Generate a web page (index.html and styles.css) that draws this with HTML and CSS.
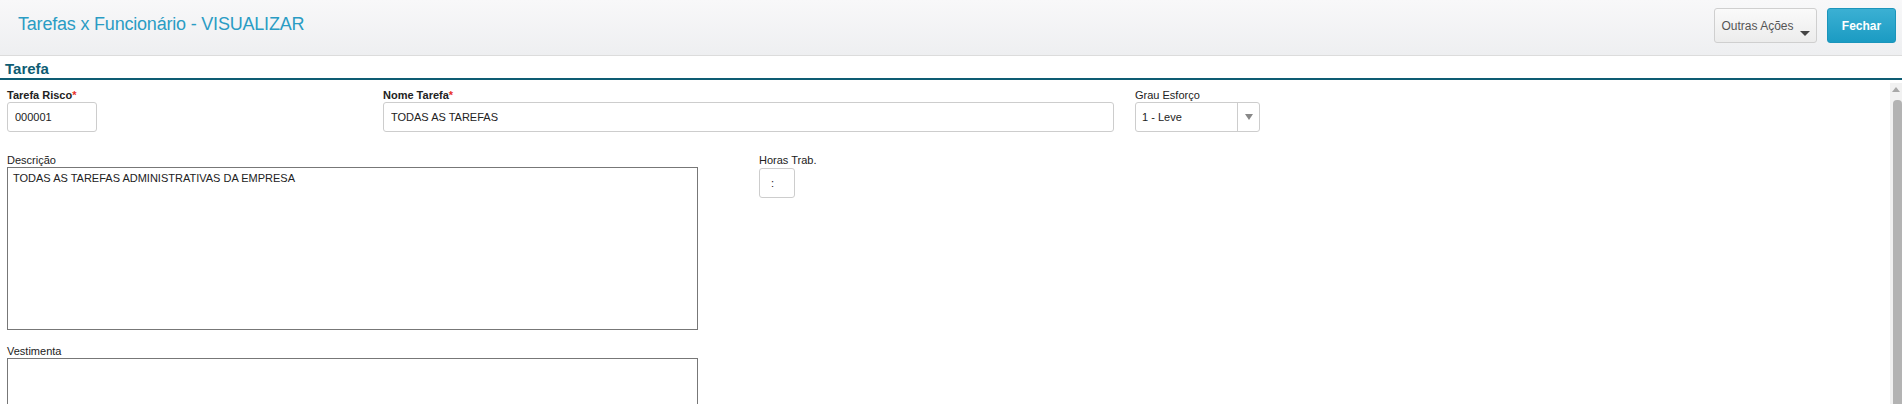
FILE: index.html
```html
<!DOCTYPE html>
<html lang="pt-BR">

<head>
    <meta charset="UTF-8">
    <title>Tarefas x Funcionário - VISUALIZAR</title>
    <link rel="stylesheet" href="styles.css">
</head>

<body>

    <div class="top_bar">
        <h1 class="page_title">Tarefas x Funcionário - VISUALIZAR</h1>
        <div class="top_actions">
            <button class="btn_other">Outras Ações<span class="caret"></span></button>
            <button class="btn_close">Fechar</button>
        </div>
    </div>

    <div class="section_head">Tarefa</div>

    <div class="page_body">
        <div class="form_area">

            <div class="form_row">
                <div class="field field_code">
                    <label>Tarefa Risco<span class="req">*</span></label>
                    <input type="text" class="box" value="000001" readonly>
                </div>
                <div class="field field_name">
                    <label>Nome Tarefa<span class="req">*</span></label>
                    <input type="text" class="box" value="TODAS AS TAREFAS" readonly>
                </div>
                <div class="field field_grade">
                    <label class="light">Grau Esforço</label>
                    <div class="box select_box">
                        <span class="select_value">1 - Leve</span>
                        <span class="select_btn"><span class="arrow"></span></span>
                    </div>
                </div>
            </div>

            <div class="form_row row_desc">
                <div class="field field_memo">
                    <label class="light">Descrição</label>
                    <textarea class="memo" readonly>TODAS AS TAREFAS ADMINISTRATIVAS DA EMPRESA</textarea>
                </div>
                <div class="field field_hours">
                    <label class="light">Horas Trab.</label>
                    <input type="text" class="box hours_box" value=":" readonly>
                </div>
            </div>

            <div class="form_row row_vest">
                <div class="field field_memo">
                    <label class="light">Vestimenta</label>
                    <textarea class="memo" readonly></textarea>
                </div>
            </div>

        </div>

        <div class="scroll_track">
            <span class="scroll_up"></span>
            <div class="scroll_thumb"></div>
        </div>
    </div>

</body>

</html>
```

FILE: styles.css
```css
*{
    box-sizing: border-box;
}

body{
    margin: 0;
    font-family: Arial, "Liberation Sans", sans-serif;
    background-color: white;
    overflow: hidden;
    height: 404px;
}

.top_bar{
    height: 56px;
    display: flex;
    justify-content: space-between;
    align-items: flex-start;
    background: linear-gradient(#f8f8f9, #eeeff1);
    border-bottom: 1px solid #dcdcdc;
}

.page_title{
    margin: 0;
    padding: 14px 0 0 18px;
    font-size: 18px;
    letter-spacing: -0.2px;
    font-weight: normal;
    color: #2a9cc4;
}

.top_actions{
    display: flex;
    gap: 10px;
    padding: 8px 6px 0 0;
}

.top_actions button{
    height: 35px;
    border-radius: 3px;
    font-family: Arial, "Liberation Sans", sans-serif;
    font-size: 12px;
    cursor: pointer;
}

.btn_other{
    position: relative;
    width: 103px;
    padding: 0 16px 0 0;
    background: linear-gradient(#fafafa, #ececec);
    border: 1px solid #cfcfcf;
    color: #555;
}

.caret{
    position: absolute;
    right: 6px;
    bottom: 6px;
    border-left: 5px solid transparent;
    border-right: 5px solid transparent;
    border-top: 5px solid #444;
}

.btn_close{
    width: 69px;
    background: linear-gradient(#3bb0d3, #1b9bc3);
    border: 1px solid #1b95bb;
    color: white;
    font-weight: bold;
}

.section_head{
    height: 24px;
    padding: 4px 0 0 5px;
    font-size: 15px;
    font-weight: bold;
    color: #0e5c73;
    border-bottom: 2px solid #0e5c73;
}

.page_body{
    display: flex;
    height: 324px;
}

.form_area{
    flex: 1;
    padding: 8px 0 0 7px;
}

.form_row{
    display: flex;
}

.field{
    display: flex;
    flex-direction: column;
}

label{
    font-size: 11px;
    font-weight: bold;
    color: #222;
    height: 14px;
    line-height: 14px;
}

label.light{
    font-weight: normal;
}

.req{
    color: #e8312a;
}

.box{
    height: 30px;
    border: 1px solid #cdcdcd;
    border-radius: 3px;
    padding: 0 7px;
    font-family: Arial, "Liberation Sans", sans-serif;
    font-size: 11px;
    color: #222;
    background: white;
    outline: none;
}

.field_code{
    width: 90px;
}

.field_name{
    width: 731px;
    margin-left: 286px;
}

.field_grade{
    width: 125px;
    margin-left: 21px;
}

.select_box{
    display: flex;
    align-items: center;
    padding: 0 0 0 6px;
}

.select_value{
    flex: 1;
}

.select_btn{
    width: 22px;
    height: 100%;
    border-left: 1px solid #cdcdcd;
    display: flex;
    align-items: center;
    justify-content: center;
}

.arrow{
    border-left: 4px solid transparent;
    border-right: 4px solid transparent;
    border-top: 6px solid #888;
}

.row_desc{
    margin-top: 21px;
}

.field_memo{
    width: 691px;
}

.memo{
    height: 163px;
    border: 1px solid #777;
    padding: 4px 5px;
    font-family: Arial, "Liberation Sans", sans-serif;
    font-size: 11px;
    color: #222;
    resize: none;
    outline: none;
}

.field_hours{
    margin-left: 61px;
}

.hours_box{
    width: 36px;
    margin-top: 1px;
    padding: 0 11px;
}

.row_vest{
    margin-top: 14px;
}

.scroll_track{
    position: relative;
    width: 12px;
    margin-top: 3px;
    background-color: #f1f1f1;
}

.scroll_up{
    position: absolute;
    top: 4px;
    left: 2px;
    border-left: 4px solid transparent;
    border-right: 4px solid transparent;
    border-bottom: 5px solid #a8a8a8;
}

.scroll_thumb{
    margin: 17px 0 0 3px;
    height: 320px;
    background-color: #b3b3b3;
    border-radius: 4px 4px 0 0;
}
```
